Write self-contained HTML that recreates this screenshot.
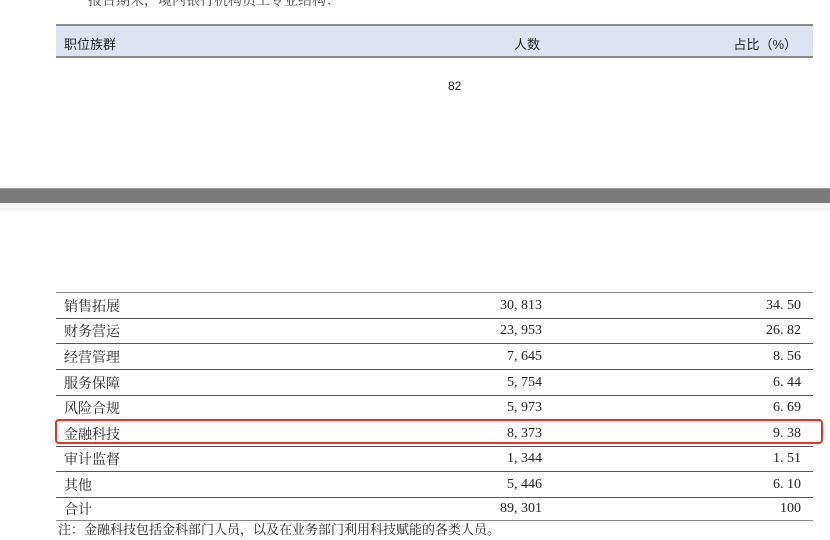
<!DOCTYPE html>
<html><head><meta charset="utf-8"><style>
body{margin:0;width:830px;height:540px;background:#fff;position:relative;overflow:hidden;font-family:"Liberation Serif","Noto Serif CJK SC",serif;color:#222}
.a{position:absolute}
.hdr{left:56px;top:24px;width:757px;height:30px;background:#dde3f0;border-top:2px solid #8a8a8a;border-bottom:2px solid #8a8a8a}
.ht{position:absolute;top:8px;font-size:13px;font-family:"Liberation Sans","Noto Sans CJK SC",sans-serif;color:#222}
.line{position:absolute;left:56px;width:757px;height:1px;background:#555}
.r{position:absolute;font-size:14px;line-height:16px}
</style></head><body>
<div class="a" style="left:88px;top:-10px;font-size:14px;color:#444">报告期末，境内银行机构员工专业结构：</div>
<div class="a hdr">
<span class="ht" style="left:8px">职位族群</span>
<span class="ht" style="left:458px">人数</span>
<span class="ht" style="right:16px">占比（%）</span>
</div>
<div class="a" style="left:448px;top:79px;font-size:12px;font-family:'Liberation Sans',sans-serif;color:#111">82</div>
<div class="a" style="left:0;top:188px;width:830px;height:14px;background:#7a7a7a;border-top:1px solid #999"></div>
<div class="a" style="left:0;top:203px;width:830px;height:8px;background:#f6f6f6"></div>

<div class="line" style="top:292px;background:#888"></div>
<div class="line" style="top:318px"></div>
<div class="line" style="top:343px"></div>
<div class="line" style="top:369px"></div>
<div class="line" style="top:395px"></div>
<div class="line" style="top:420px"></div>
<div class="line" style="top:446px"></div>
<div class="line" style="top:471px"></div>
<div class="line" style="top:497px"></div>
<div class="line" style="top:520px;background:#888"></div>

<div class="r" style="left:64px;top:300px">销售拓展</div><div class="r" style="right:288px;top:298px">30, 813</div><div class="r" style="right:29px;top:298px">34. 50</div>
<div class="r" style="left:64px;top:325px">财务营运</div><div class="r" style="right:288px;top:323px">23, 953</div><div class="r" style="right:29px;top:323px">26. 82</div>
<div class="r" style="left:64px;top:351px">经营管理</div><div class="r" style="right:288px;top:349px">7, 645</div><div class="r" style="right:29px;top:349px">8. 56</div>
<div class="r" style="left:64px;top:377px">服务保障</div><div class="r" style="right:288px;top:375px">5, 754</div><div class="r" style="right:29px;top:375px">6. 44</div>
<div class="r" style="left:64px;top:402px">风险合规</div><div class="r" style="right:288px;top:400px">5, 973</div><div class="r" style="right:29px;top:400px">6. 69</div>
<div class="r" style="left:64px;top:428px">金融科技</div><div class="r" style="right:288px;top:426px">8, 373</div><div class="r" style="right:29px;top:426px">9. 38</div>
<div class="r" style="left:64px;top:453px">审计监督</div><div class="r" style="right:288px;top:451px">1, 344</div><div class="r" style="right:29px;top:451px">1. 51</div>
<div class="r" style="left:64px;top:479px">其他</div><div class="r" style="right:288px;top:477px">5, 446</div><div class="r" style="right:29px;top:477px">6. 10</div>
<div class="r" style="left:64px;top:503px">合计</div><div class="r" style="right:288px;top:501px">89, 301</div><div class="r" style="right:29px;top:501px">100</div>
<div class="r" style="left:58px;top:522px;font-size:13px">注：金融科技包括金科部门人员，以及在业务部门利用科技赋能的各类人员。</div>

<div class="a" style="left:55px;top:419px;width:764px;height:21px;border:2px solid #e8322a;border-radius:4px"></div>
</body></html>
